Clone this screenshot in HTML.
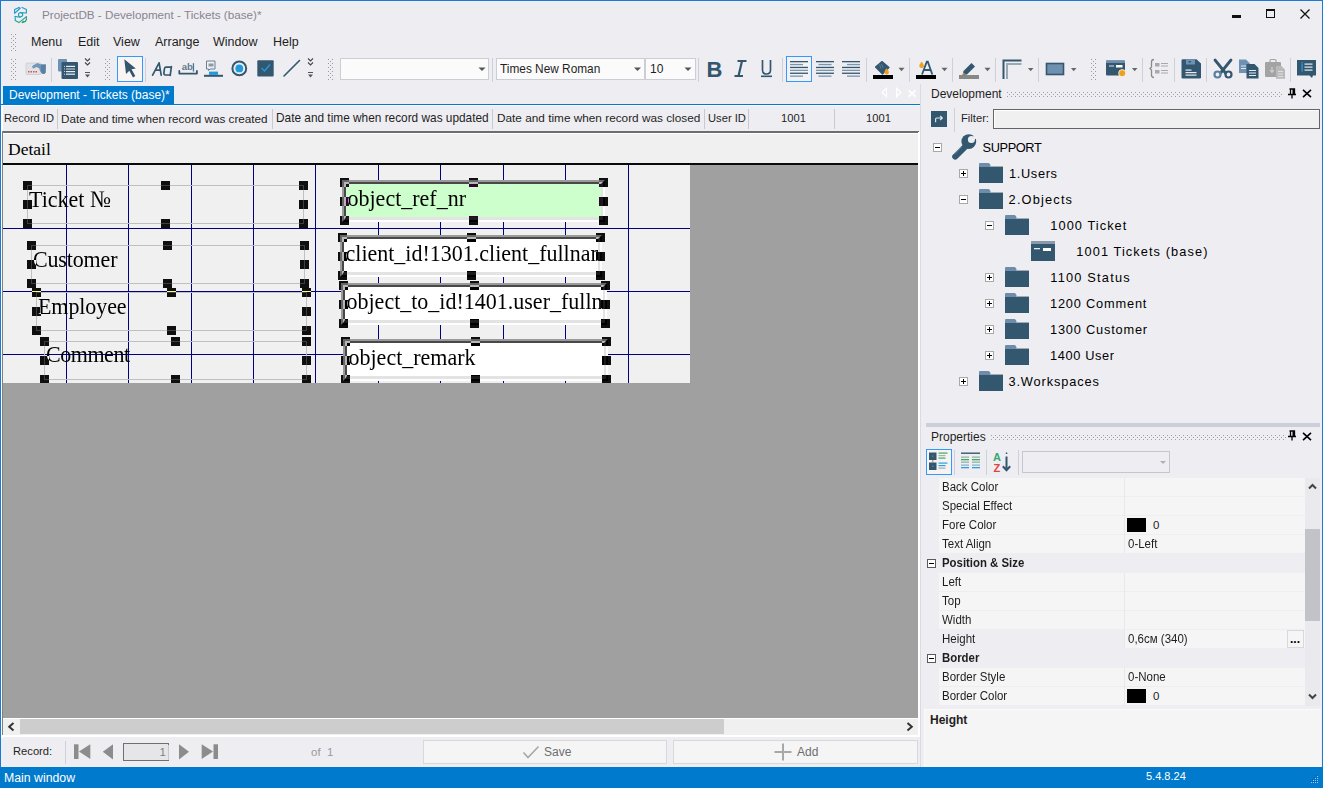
<!DOCTYPE html>
<html><head><meta charset="utf-8">
<style>
*{margin:0;padding:0;box-sizing:border-box}
html,body{width:1323px;height:788px;overflow:hidden;background:#eeeef2}
body{position:relative;font-family:"Liberation Sans",sans-serif;font-size:12px;color:#1e1e1e}
.a{position:absolute}
.t{position:absolute;white-space:nowrap;line-height:1}
.serif{font-family:"Liberation Serif",serif}
.sep{position:absolute;width:1px;background:#cccedb}
.grip{position:absolute;width:5px;background-image:radial-gradient(circle,#999 0.7px,transparent 0.8px);background-size:4px 4px}
.hd{position:absolute;width:9px;height:9px;background:#0f0f0f}
.tbi{position:absolute}
</style></head><body>
<!-- window border -->
<div class="a" style="left:0;top:0;width:1323px;height:1px;background:#1a7ad4"></div>
<div class="a" style="left:0;top:0;width:1px;height:788px;background:#1a7ad4"></div>
<div class="a" style="left:1322px;top:0;width:1px;height:788px;background:#1a7ad4"></div>

<!-- TITLE -->
<svg class="a" style="left:10px;top:4px" width="22" height="22" viewBox="0 0 22 22">
 <defs><linearGradient id="ig" gradientUnits="userSpaceOnUse" x1="5" y1="3" x2="13" y2="19"><stop offset="0" stop-color="#2196e0"/><stop offset="0.55" stop-color="#22a0b8"/><stop offset="1" stop-color="#2aa06a"/></linearGradient></defs>
 <g fill="none" stroke="url(#ig)" stroke-width="1.15" stroke-linejoin="round">
  <path d="M4.6 9.3 L4.6 5.6 L9 3.4 L10.2 4.2 Z"/>
  <path d="M11.6 3.2 L16.4 5.6 L16.4 9 L10.6 8.6"/>
  <path d="M8.6 9.6 L10.6 8.4 L12.6 9.4 L12.6 11.8 L10.6 13 L8.6 12 Z"/>
  <path d="M4.4 12.4 L10.4 13.2 M5.2 12.8 L5.2 16.4 L9 18.6 L16.4 12.6 L16.4 15.6 L15.4 17.4 L12.2 18.6 L13.6 17"/>
 </g>
</svg>
<div class="t" id="title" style="left:42px;top:9px;font-size:11.7px;color:#8a8490">ProjectDB - Development - Tickets (base)*</div>
<!-- window buttons -->
<div class="a" style="left:1232px;top:15px;width:9px;height:3px;background:#111"></div>
<div class="a" style="left:1266px;top:9px;width:9px;height:9px;border:1px solid #111;border-top-width:2px"></div>
<svg class="a" style="left:1300px;top:9px" width="10" height="10"><path d="M0.5 0.5 L9.5 9.5 M9.5 0.5 L0.5 9.5" stroke="#111" stroke-width="1.3"/></svg>

<!-- MENU -->
<div class="t" style="left:31px;top:36px;font-size:12.5px;color:#1e1e1e">Menu</div>
<div class="t" style="left:78px;top:36px;font-size:12.5px">Edit</div>
<div class="t" style="left:113px;top:36px;font-size:12.5px">View</div>
<div class="t" style="left:155px;top:36px;font-size:12.5px">Arrange</div>
<div class="t" style="left:213px;top:36px;font-size:12.5px">Window</div>
<div class="t" style="left:273px;top:36px;font-size:12.5px">Help</div>

<!-- TOOLBAR -->
<svg class="a" style="left:0;top:0" width="1323" height="90" viewBox="0 0 1323 90">
<defs><pattern id="gp" width="4" height="4" patternUnits="userSpaceOnUse"><rect x="0" y="0" width="1" height="1" fill="#999"/><rect x="2" y="2" width="1" height="1" fill="#999"/></pattern></defs>
<!-- grips --><g fill="#9a9a9a"><rect x="11" y="34" width="1" height="1"/><rect x="15" y="34" width="1" height="1"/><rect x="13" y="36" width="1" height="1"/><rect x="11" y="38" width="1" height="1"/><rect x="15" y="38" width="1" height="1"/><rect x="13" y="40" width="1" height="1"/><rect x="11" y="42" width="1" height="1"/><rect x="15" y="42" width="1" height="1"/><rect x="13" y="44" width="1" height="1"/><rect x="11" y="46" width="1" height="1"/><rect x="15" y="46" width="1" height="1"/><rect x="13" y="48" width="1" height="1"/><rect x="11" y="50" width="1" height="1"/><rect x="15" y="50" width="1" height="1"/><rect x="11" y="59" width="1" height="1"/><rect x="15" y="59" width="1" height="1"/><rect x="13" y="61" width="1" height="1"/><rect x="11" y="63" width="1" height="1"/><rect x="15" y="63" width="1" height="1"/><rect x="13" y="65" width="1" height="1"/><rect x="11" y="67" width="1" height="1"/><rect x="15" y="67" width="1" height="1"/><rect x="13" y="69" width="1" height="1"/><rect x="11" y="71" width="1" height="1"/><rect x="15" y="71" width="1" height="1"/><rect x="13" y="73" width="1" height="1"/><rect x="11" y="75" width="1" height="1"/><rect x="15" y="75" width="1" height="1"/><rect x="13" y="77" width="1" height="1"/><rect x="11" y="79" width="1" height="1"/><rect x="15" y="79" width="1" height="1"/><rect x="105" y="59" width="1" height="1"/><rect x="109" y="59" width="1" height="1"/><rect x="107" y="61" width="1" height="1"/><rect x="105" y="63" width="1" height="1"/><rect x="109" y="63" width="1" height="1"/><rect x="107" y="65" width="1" height="1"/><rect x="105" y="67" width="1" height="1"/><rect x="109" y="67" width="1" height="1"/><rect x="107" y="69" width="1" height="1"/><rect x="105" y="71" width="1" height="1"/><rect x="109" y="71" width="1" height="1"/><rect x="107" y="73" width="1" height="1"/><rect x="105" y="75" width="1" height="1"/><rect x="109" y="75" width="1" height="1"/><rect x="107" y="77" width="1" height="1"/><rect x="105" y="79" width="1" height="1"/><rect x="109" y="79" width="1" height="1"/><rect x="328" y="59" width="1" height="1"/><rect x="332" y="59" width="1" height="1"/><rect x="330" y="61" width="1" height="1"/><rect x="328" y="63" width="1" height="1"/><rect x="332" y="63" width="1" height="1"/><rect x="330" y="65" width="1" height="1"/><rect x="328" y="67" width="1" height="1"/><rect x="332" y="67" width="1" height="1"/><rect x="330" y="69" width="1" height="1"/><rect x="328" y="71" width="1" height="1"/><rect x="332" y="71" width="1" height="1"/><rect x="330" y="73" width="1" height="1"/><rect x="328" y="75" width="1" height="1"/><rect x="332" y="75" width="1" height="1"/><rect x="330" y="77" width="1" height="1"/><rect x="328" y="79" width="1" height="1"/><rect x="332" y="79" width="1" height="1"/><rect x="1091" y="59" width="1" height="1"/><rect x="1095" y="59" width="1" height="1"/><rect x="1093" y="61" width="1" height="1"/><rect x="1091" y="63" width="1" height="1"/><rect x="1095" y="63" width="1" height="1"/><rect x="1093" y="65" width="1" height="1"/><rect x="1091" y="67" width="1" height="1"/><rect x="1095" y="67" width="1" height="1"/><rect x="1093" y="69" width="1" height="1"/><rect x="1091" y="71" width="1" height="1"/><rect x="1095" y="71" width="1" height="1"/><rect x="1093" y="73" width="1" height="1"/><rect x="1091" y="75" width="1" height="1"/><rect x="1095" y="75" width="1" height="1"/><rect x="1093" y="77" width="1" height="1"/><rect x="1091" y="79" width="1" height="1"/><rect x="1095" y="79" width="1" height="1"/></g>
<!-- separators -->
<g fill="#cdd0da">
<rect x="51" y="58" width="1" height="24"/><rect x="145" y="58" width="1" height="24"/>
<rect x="492" y="58" width="1" height="24"/><rect x="698" y="58" width="1" height="24"/>
<rect x="782" y="58" width="1" height="24"/><rect x="866" y="58" width="1" height="24"/>
<rect x="909" y="58" width="1" height="24"/><rect x="952" y="58" width="1" height="24"/>
<rect x="995" y="58" width="1" height="24"/><rect x="1038" y="58" width="1" height="24"/>
<rect x="1142" y="58" width="1" height="24"/><rect x="1174" y="58" width="1" height="24"/>
<rect x="1206" y="58" width="1" height="24"/><rect x="1290" y="58" width="1" height="24"/>
</g>
<!-- icon1 card + hand -->
<rect x="26" y="63" width="15" height="11.5" rx="1" fill="#dfe2e6" stroke="#c8ccd2" stroke-width="0.8"/>
<g fill="#e84a4a"><rect x="28" y="71" width="1.5" height="1.5"/><rect x="30.5" y="71" width="1.5" height="1.5"/><rect x="33" y="71" width="1.5" height="1.5"/><rect x="35.5" y="71" width="1.5" height="1.5"/></g>
<path d="M32.3 67.3 Q31.8 66.2 33 65.5 L37.3 63 L41.2 64.4 L45.8 64.6 L45.6 72.3 Q45 74.2 43.6 74.1 L42 73.4 L40 71 L39.2 68.2 L36.4 66.9 L33.6 68.6 Q32.7 68.6 32.3 67.3 Z" fill="#7196b8"/>
<path d="M41 64.6 L45.8 64.6 L45.6 72.3 Q45 74.2 43.6 74.1 L42 73.4 L41 71.5 Z" fill="#5b80a3"/>
<!-- icon2 stacked list -->
<rect x="58" y="59" width="9" height="12.5" rx="1" fill="#6f92b4"/>
<rect x="61.5" y="62" width="16.5" height="17" rx="1" fill="#345770"/>
<g fill="#e8edf2"><rect x="64" y="66" width="0.9" height="0.9"/><rect x="66" y="65.8" width="9" height="1.2"/>
<rect x="64" y="68.5" width="0.9" height="0.9"/><rect x="66" y="68.4" width="9" height="1.2" fill="#b8c6d3"/>
<rect x="64" y="71" width="0.9" height="0.9"/><rect x="66" y="71" width="9" height="1.2"/>
<rect x="64" y="73.8" width="0.9" height="0.9"/><rect x="66" y="73.6" width="9" height="1.2"/></g>
<!-- chevrons -->
<g fill="none" stroke="#444" stroke-width="1.1"><path d="M85 58.5 L87.5 61 L90 58.5 M85 62.5 L87.5 65 L90 62.5"/></g>
<rect x="85" y="72" width="5" height="1" fill="#555"/><path d="M85 74.5 L90 74.5 L87.5 77.5 Z" fill="#555"/>
<g fill="none" stroke="#444" stroke-width="1.1"><path d="M308 58.5 L310.5 61 L313 58.5 M308 62.5 L310.5 65 L313 62.5"/></g>
<rect x="308" y="72" width="5" height="1" fill="#555"/><path d="M308 74.5 L313 74.5 L310.5 77.5 Z" fill="#555"/>
<!-- selected arrow -->
<rect x="117.5" y="56.5" width="25" height="25" fill="#f9f5f3" stroke="#3399ff" stroke-width="1"/>
<path d="M124.3 59.3 L135.8 68.5 L131.5 69.2 L135.3 76 L133 77.6 L129.3 70.8 L126 74 Z" fill="#345770"/>
<!-- Aa -->
<path d="M152.6 75.2 L159.1 62.8 L161.2 75.2 M155.3 70.2 L160.4 70.2" fill="none" stroke="#345770" stroke-width="1.7" stroke-linejoin="round" stroke-linecap="round"/>
<path d="M171.3 67 L165.8 67.1 Q164.6 67.2 164.4 69 L163.9 73.2 Q163.8 75 165.4 75 L170.4 74.9 M171.4 66.6 L170.2 75.3" fill="none" stroke="#345770" stroke-width="1.7" stroke-linejoin="round" stroke-linecap="round"/>
<!-- abl -->
<text x="181.8" y="70.4" font-family="Liberation Sans" font-weight="bold" font-size="9.6" fill="#5f7a90" letter-spacing="-0.2">ab</text>
<rect x="192.8" y="63.2" width="1.3" height="8.4" fill="#56728a"/>
<path d="M179.3 71 L179.3 73.6 L196.9 73.6 L196.9 71" fill="none" stroke="#345770" stroke-width="1.8" stroke-linecap="round" stroke-linejoin="round"/>
<!-- button icon -->
<path d="M206.5 61 L215 61 L215 69 L210 69 L208.5 70.5 L208.5 69 L206.5 69 Z" fill="#eef0f3" stroke="#6d7f8e" stroke-width="1"/>
<rect x="208.5" y="63.5" width="5" height="3" fill="#8b9aa8"/>
<rect x="209" y="71.6" width="9" height="3.2" fill="#1e9be0"/>
<rect x="204" y="74.8" width="19" height="2" fill="#345770"/>
<!-- radio -->
<circle cx="239.3" cy="68.4" r="6.9" fill="none" stroke="#345770" stroke-width="2"/>
<circle cx="239.3" cy="68.4" r="3.9" fill="#1e9be0"/>
<!-- checkbox -->
<rect x="257.3" y="60.3" width="16.4" height="16.2" rx="1" fill="#345770"/>
<path d="M261.5 68 L264.5 71 L270 64.5" fill="none" stroke="#1e9be0" stroke-width="1.3"/>
<!-- line -->
<path d="M284 76 L299.5 60.5" stroke="#345770" stroke-width="1.6" stroke-linecap="round"/>
<!-- combos -->
<rect x="340.5" y="58.5" width="148" height="21" fill="#fbfbfb" stroke="#ccced6"/>
<path d="M478.5 67.5 L485.5 67.5 L482 71 Z" fill="#555"/>
<rect x="496.5" y="58.5" width="148" height="21" fill="#fbfbfb" stroke="#ccced6"/>
<path d="M634 67.5 L641 67.5 L637.5 71 Z" fill="#555"/>
<rect x="645.5" y="58.5" width="50" height="21" fill="#fbfbfb" stroke="#ccced6"/>
<path d="M684.5 67.5 L691.5 67.5 L688 71 Z" fill="#555"/>
<text x="500" y="73" font-family="Liberation Sans" font-size="11.85" fill="#1e1e1e">Times New Roman</text>
<text x="650" y="73" font-family="Liberation Sans" font-size="12" fill="#1e1e1e">10</text>
<!-- B I U -->
<text x="706.5" y="77" font-family="Liberation Sans" font-weight="bold" font-size="22" fill="#345770">B</text>
<path d="M737.5 61 L746.5 61 M734.5 76 L743 76 M742 61 L738.5 76" stroke="#345770" stroke-width="2.2" fill="none"/>
<path d="M762.5 60 L762.5 70 Q762.5 74 766.5 74 Q770.5 74 770.5 70 L770.5 60" stroke="#345770" stroke-width="1.7" fill="none"/>
<rect x="761" y="75.5" width="11" height="1.6" fill="#345770"/>
<!-- align -->
<rect x="786.5" y="56.5" width="25" height="25" fill="#f2f2f4" stroke="#3399ff" stroke-width="1"/>
<g fill="#345770">
<rect x="790" y="61" width="18" height="1.3"/><rect x="790" y="66.8" width="18" height="1.3"/><rect x="790" y="72.6" width="18" height="1.3"/>
<rect x="816" y="61" width="18" height="1.3"/><rect x="816" y="66.8" width="18" height="1.3"/><rect x="816" y="72.6" width="18" height="1.3"/>
<rect x="842" y="61" width="18" height="1.3"/><rect x="842" y="66.8" width="18" height="1.3"/><rect x="842" y="72.6" width="18" height="1.3"/>
</g>
<g fill="#7a94ab">
<rect x="790" y="63.9" width="13" height="1.3"/><rect x="790" y="69.7" width="18" height="1.3"/><rect x="790" y="75.5" width="13" height="1.3"/>
<rect x="818.5" y="63.9" width="13" height="1.3"/><rect x="816" y="69.7" width="18" height="1.3"/><rect x="818.5" y="75.5" width="13" height="1.3"/>
<rect x="847" y="63.9" width="13" height="1.3"/><rect x="842" y="69.7" width="18" height="1.3"/><rect x="847" y="75.5" width="13" height="1.3"/>
</g>
<!-- fill color -->
<path d="M875.5 67 L882 61.5 L889 67.5 L882.5 74 Z" fill="#345770" stroke="#345770" stroke-width="1.2" stroke-linejoin="round"/><path d="M879.5 64.5 L881 68.5 M881.5 63.8 L883 67.8" stroke="#6f92b4" stroke-width="0.6"/>
<path d="M886.6 68.2 Q883.8 71.6 884.4 73.1 Q885.2 74.6 886.8 74.5 Q888.6 74.3 888.9 72.7 Q889.2 71 886.6 68.2 Z" fill="#f0a020"/>
<rect x="873" y="75" width="20" height="4" fill="#000"/>
<path d="M898.5 67.8 L904.5 67.8 L901.5 71.2 Z" fill="#666"/>
<!-- font color -->
<path d="M922 74.5 L926.8 61.7 L927.8 61.7 L932.3 74.5 M924 70 L930.5 70" stroke="#345770" stroke-width="1.8" fill="none"/>
<path d="M921.6 61.6 Q918.8 65.2 919.4 66.6 Q920.2 68.2 921.8 68.1 Q923.6 67.9 923.9 66.3 Q924.2 64.6 921.6 61.6 Z" fill="#f0a020"/>
<rect x="916" y="75" width="20" height="4" fill="#000"/>
<path d="M941.5 67.8 L947.5 67.8 L944.5 71.2 Z" fill="#666"/>
<!-- pen -->
<path d="M963.5 71 L971.5 63 L975 66.5 L967 74.5 L962.5 75 Z" fill="#345770"/>
<path d="M962 75 L963.5 72.5 L965 74 Z" fill="#f0a020"/>
<rect x="959" y="75" width="20" height="4" fill="#878787"/>
<path d="M984.5 67.8 L990.5 67.8 L987.5 71.2 Z" fill="#666"/>
<!-- border corner -->
<path d="M1003.5 79 L1003.5 60.5 L1021.5 60.5" fill="none" stroke="#345770" stroke-width="2"/>
<path d="M1007 79 L1007 64 L1021.5 64" fill="none" stroke="#9aa8b4" stroke-width="2"/>
<path d="M1028 68 L1033.5 68 L1030.7 71.3 Z" fill="#666"/>
<!-- rect -->
<rect x="1046.5" y="63.5" width="17" height="11" fill="#7090b0" stroke="#345770" stroke-width="1.6"/>
<path d="M1071 68 L1076.5 68 L1073.7 71.3 Z" fill="#666"/>
<!-- form props -->
<rect x="1106" y="60.5" width="19" height="15" rx="1" fill="#345770"/>
<rect x="1106" y="60.5" width="19" height="2.5" fill="#6f8fae"/>
<rect x="1109" y="65.5" width="5" height="1" fill="#dfe6ec"/>
<rect x="1116" y="65" width="6.5" height="2.5" fill="#ffffff"/>
<circle cx="1122.2" cy="73.2" r="3.6" fill="#f0a020" stroke="#fff" stroke-width="0.8"/>
<path d="M1132 68 L1137.5 68 L1134.7 71.3 Z" fill="#666"/>
<!-- brace list -->
<path d="M1154 59.5 Q1151.5 59.5 1151.5 62 L1151.5 67 L1150 68.5 L1151.5 70 L1151.5 75 Q1151.5 77.5 1154 77.5" fill="none" stroke="#8a8a8a" stroke-width="1.3"/>
<g fill="#a9a9a9"><rect x="1155" y="63" width="4.5" height="3.5"/><rect x="1155" y="70" width="4.5" height="3.5"/>
<rect x="1161" y="63" width="7" height="1"/><rect x="1161" y="65.5" width="7" height="1"/><rect x="1161" y="70" width="7" height="1"/><rect x="1161" y="72.5" width="7" height="1"/></g>
<!-- save -->
<path d="M1181.5 60.5 Q1181.5 59.2 1182.8 59.2 L1196.5 59.2 L1201 63.5 L1201 77.3 Q1201 78.6 1199.7 78.6 L1182.8 78.6 Q1181.5 78.6 1181.5 77.3 Z" fill="#345770"/>
<rect x="1186" y="59.2" width="9" height="5.3" fill="#6f92b4"/>
<rect x="1188.5" y="61" width="2.5" height="1.5" fill="#345770"/>
<g fill="#e8edf2"><rect x="1185.5" y="69.5" width="6" height="1.2"/><rect x="1185.5" y="72" width="11" height="1.2"/><rect x="1185.5" y="74.5" width="11" height="1.2"/></g>
<!-- scissors -->
<path d="M1215 60 L1225.5 73 M1231 60 L1220.5 73" stroke="#345770" stroke-width="2.8" stroke-linecap="round"/>
<circle cx="1217.5" cy="74.5" r="3" fill="none" stroke="#5b7f9e" stroke-width="2.2"/>
<circle cx="1228.5" cy="74.5" r="3" fill="none" stroke="#345770" stroke-width="2.2"/>
<!-- copy -->
<path d="M1239 59.5 L1246 59.5 L1250 63.5 L1250 73 L1239 73 Z" fill="#6f92b4"/>
<path d="M1246.5 64 L1254.5 64 L1258.5 68 L1258.5 78.5 L1246.5 78.5 Z" fill="#345770"/>
<g fill="#e8edf2"><rect x="1249" y="70" width="7" height="1"/><rect x="1249" y="72.5" width="7" height="1"/><rect x="1249" y="75" width="7" height="1"/>
<rect x="1241" y="65.5" width="5" height="1" fill="#dde5ec"/><rect x="1241" y="68" width="5" height="1" fill="#dde5ec"/></g>
<!-- paste grey -->
<rect x="1265" y="62" width="16" height="15" rx="1" fill="#a3a3a3"/>
<rect x="1270" y="59.5" width="6" height="3.5" rx="1" fill="none" stroke="#a3a3a3" stroke-width="1.2"/>
<path d="M1276 66 L1281.5 66 L1285 69.5 L1285 78.7 L1276 78.7 Z" fill="#b9b9b9"/>
<g fill="#e0e0e0"><rect x="1278" y="71" width="5" height="1"/><rect x="1278" y="73.5" width="5" height="1"/><rect x="1278" y="76" width="5" height="1"/></g>
<path d="M1272 67 L1272 72 M1270 70 L1272 72.5 L1274 70" fill="none" stroke="#e0e0e0" stroke-width="0.9"/>
<!-- comment -->
<path d="M1297 60 L1316 60 L1316 75.5 L1313 75.5 L1312 78 L1309.5 75.5 L1297 75.5 Z" fill="#345770"/>
<rect x="1301.5" y="63.5" width="1.2" height="8" fill="#2aa0e0"/><rect x="1301.5" y="62" width="1.2" height="1" fill="#2aa0e0"/>
<g fill="#e8edf2"><rect x="1304.5" y="63.5" width="8" height="1.2"/><rect x="1304.5" y="66.5" width="8" height="1.2"/><rect x="1304.5" y="69.5" width="8" height="1.2"/></g>
</svg>

<!-- DOC TAB -->
<div class="a" style="left:3px;top:86px;width:171px;height:18px;background:#007acc"></div>
<div class="t" style="left:9px;top:89px;font-size:12px;color:#fff">Development - Tickets (base)*</div>
<div class="a" style="left:1px;top:104px;width:919px;height:1px;background:#007acc"></div>
<svg class="a" style="left:875px;top:84px" width="45" height="18" viewBox="875 84 45 18"><g fill="none" stroke="#fff" stroke-width="1.2" stroke-linejoin="miter"><path d="M886.5 88.3 L882.2 92.4 L886.5 96.5 Z"/><path d="M896.6 88.3 L900.9 92.4 L896.6 96.5 Z"/><path d="M908.6 90.3 L915.6 96.6 M915.6 90.3 L908.6 96.6" stroke-width="1.6"/></g></svg>
<!-- doc area left border -->
<div class="a" style="left:1px;top:105px;width:2px;height:633px;background:#fff"></div>
<div class="a" style="left:2px;top:131px;width:1px;height:604px;background:#808080"></div>

<!-- COLUMN HEADERS -->
<div class="a" style="left:3px;top:105px;width:917px;height:1px;background:#fff"></div>
<div class="t" style="left:4px;top:113px;font-size:11.1px">Record ID</div>
<div class="a" style="left:57px;top:109px;width:1px;height:20px;background:#c9c9cf"></div>
<div class="t" style="left:61px;top:113px;font-size:11.7px">Date and time when record was created</div>
<div class="a" style="left:272px;top:109px;width:1px;height:20px;background:#c9c9cf"></div>
<div class="t" style="left:276px;top:113px;font-size:11.85px">Date and time when record was updated</div>
<div class="a" style="left:492px;top:109px;width:1px;height:20px;background:#c9c9cf"></div>
<div class="t" style="left:497px;top:113px;font-size:11.8px">Date and time when record was closed</div>
<div class="a" style="left:704px;top:109px;width:1px;height:20px;background:#c9c9cf"></div>
<div class="t" style="left:708px;top:113px;font-size:11.2px">User ID</div>
<div class="a" style="left:748px;top:109px;width:1px;height:20px;background:#c9c9cf"></div>
<div class="t" style="left:781px;top:113px;font-size:11.2px">1001</div>
<div class="a" style="left:834px;top:109px;width:1px;height:20px;background:#c9c9cf"></div>
<div class="t" style="left:866px;top:113px;font-size:11.2px">1001</div>


<!-- DETAIL BAND -->
<div class="a" style="left:3px;top:131px;width:916px;height:2px;background:#6e6e6e"></div>
<div class="a" style="left:918px;top:132px;width:2px;height:605px;background:#fff"></div>
<div class="a" style="left:3px;top:133px;width:915px;height:30px;background:#f0f0f0;border-top:1px solid #fff"></div>
<div class="t serif" style="left:8px;top:141px;font-size:17.5px;color:#000">Detail</div>
<div class="a" style="left:3px;top:163px;width:915px;height:2px;background:#0a0a0a"></div>

<!-- WORKSPACE -->
<div class="a" style="left:3px;top:165px;width:915px;height:553px;background:#a0a0a0"></div>
<div class="a" id="form" style="left:3px;top:165px;width:687px;height:218px;background:#f0f0f0;overflow:hidden;isolation:isolate"><div class="a" style="left:63px;top:0px;width:1px;height:218px;background:#000080"></div>
<div class="a" style="left:125px;top:0px;width:1px;height:218px;background:#000080"></div>
<div class="a" style="left:188px;top:0px;width:1px;height:218px;background:#000080"></div>
<div class="a" style="left:250px;top:0px;width:1px;height:218px;background:#000080"></div>
<div class="a" style="left:312px;top:0px;width:1px;height:218px;background:#000080"></div>
<div class="a" style="left:375px;top:0px;width:1px;height:218px;background:#000080"></div>
<div class="a" style="left:437px;top:0px;width:1px;height:218px;background:#000080"></div>
<div class="a" style="left:500px;top:0px;width:1px;height:218px;background:#000080"></div>
<div class="a" style="left:562px;top:0px;width:1px;height:218px;background:#000080"></div>
<div class="a" style="left:625px;top:0px;width:1px;height:218px;background:#000080"></div>
<div class="a" style="left:0px;top:63px;width:687px;height:1px;background:#000080"></div>
<div class="a" style="left:0px;top:126px;width:687px;height:1px;background:#000080"></div>
<div class="a" style="left:0px;top:189px;width:687px;height:1px;background:#000080"></div>
<div class="a" style="left:24px;top:20px;width:277px;height:39px;border:1px solid #c0c0c0"></div>
<div class="t serif" style="left:26px;top:24px;font-size:22px;letter-spacing:0px;color:#000;line-height:22px;transform:scaleY(1.08);transform-origin:0 18.4px">Ticket №</div>
<div class="a" style="left:28px;top:80px;width:274px;height:39px;border:1px solid #c0c0c0"></div>
<div class="t serif" style="left:30px;top:84px;font-size:22px;letter-spacing:-0.15px;color:#000;line-height:22px;transform:scaleY(1.08);transform-origin:0 18.4px">Customer</div>
<div class="a" style="left:33px;top:127px;width:271px;height:39px;border:1px solid #c0c0c0"></div>
<div class="t serif" style="left:35px;top:131px;font-size:22px;letter-spacing:-0.08px;color:#000;line-height:22px;transform:scaleY(1.08);transform-origin:0 18.4px">Employee</div>
<div class="a" style="left:41px;top:176px;width:263px;height:39px;border:1px solid #c0c0c0"></div>
<div class="t serif" style="left:43px;top:179px;font-size:22px;letter-spacing:-0.45px;color:#000;line-height:22px;transform:scaleY(1.08);transform-origin:0 18.4px">Comment</div>
<div class="a" style="left:339px;top:15px;width:263px;height:42px;border-style:solid;border-width:2px;border-color:#9a9a9a #fff #fff #9a9a9a;background:#e3e3e3"><div class="a" style="left:0;top:0;right:0;bottom:0;border-style:solid;border-width:2px 2px 3px 2px;border-color:#484848 #e3e3e3 #e3e3e3 #484848;background:#ccffcc;overflow:hidden"><div class="t serif" style="left:1.5px;top:4px;font-size:22px;color:#000;line-height:22px;transform:scaleY(1.075);transform-origin:0 18.4px">object_ref_nr</div></div></div>
<div class="a" style="left:337px;top:70px;width:262px;height:42px;border-style:solid;border-width:2px;border-color:#9a9a9a #fff #fff #9a9a9a;background:#e3e3e3"><div class="a" style="left:0;top:0;right:0;bottom:0;border-style:solid;border-width:2px 2px 3px 2px;border-color:#484848 #e3e3e3 #e3e3e3 #484848;background:#fff;overflow:hidden"><div class="t serif" style="left:1.5px;top:4px;font-size:22px;color:#000;line-height:22px;transform:scaleY(1.075);transform-origin:0 18.4px">client_id!1301.client_fullname</div></div></div>
<div class="a" style="left:338px;top:118px;width:266px;height:42px;border-style:solid;border-width:2px;border-color:#9a9a9a #fff #fff #9a9a9a;background:#e3e3e3"><div class="a" style="left:0;top:0;right:0;bottom:0;border-style:solid;border-width:2px 2px 3px 2px;border-color:#484848 #e3e3e3 #e3e3e3 #484848;background:#fff;overflow:hidden"><div class="t serif" style="left:1.5px;top:4px;font-size:22px;color:#000;line-height:22px;transform:scaleY(1.075);transform-origin:0 18.4px">object_to_id!1401.user_fullname</div></div></div>
<div class="a" style="left:340px;top:174px;width:265px;height:42px;border-style:solid;border-width:2px;border-color:#9a9a9a #fff #fff #9a9a9a;background:#e3e3e3"><div class="a" style="left:0;top:0;right:0;bottom:0;border-style:solid;border-width:2px 2px 3px 2px;border-color:#484848 #e3e3e3 #e3e3e3 #484848;background:#fff;overflow:hidden"><div class="t serif" style="left:1.5px;top:4px;font-size:22px;color:#000;line-height:22px;transform:scaleY(1.075);transform-origin:0 18.4px">object_remark</div></div></div>
<div class="a" style="left:20px;top:16px;width:9px;height:9px;background:#fff;mix-blend-mode:difference"></div>
<div class="a" style="left:158px;top:16px;width:9px;height:9px;background:#fff;mix-blend-mode:difference"></div>
<div class="a" style="left:296px;top:16px;width:9px;height:9px;background:#fff;mix-blend-mode:difference"></div>
<div class="a" style="left:20px;top:35px;width:9px;height:9px;background:#fff;mix-blend-mode:difference"></div>
<div class="a" style="left:296px;top:35px;width:9px;height:9px;background:#fff;mix-blend-mode:difference"></div>
<div class="a" style="left:20px;top:54px;width:9px;height:9px;background:#fff;mix-blend-mode:difference"></div>
<div class="a" style="left:158px;top:54px;width:9px;height:9px;background:#fff;mix-blend-mode:difference"></div>
<div class="a" style="left:296px;top:54px;width:9px;height:9px;background:#fff;mix-blend-mode:difference"></div>
<div class="a" style="left:24px;top:76px;width:9px;height:9px;background:#fff;mix-blend-mode:difference"></div>
<div class="a" style="left:160px;top:76px;width:9px;height:9px;background:#fff;mix-blend-mode:difference"></div>
<div class="a" style="left:297px;top:76px;width:9px;height:9px;background:#fff;mix-blend-mode:difference"></div>
<div class="a" style="left:24px;top:95px;width:9px;height:9px;background:#fff;mix-blend-mode:difference"></div>
<div class="a" style="left:297px;top:95px;width:9px;height:9px;background:#fff;mix-blend-mode:difference"></div>
<div class="a" style="left:24px;top:114px;width:9px;height:9px;background:#fff;mix-blend-mode:difference"></div>
<div class="a" style="left:160px;top:114px;width:9px;height:9px;background:#fff;mix-blend-mode:difference"></div>
<div class="a" style="left:297px;top:114px;width:9px;height:9px;background:#fff;mix-blend-mode:difference"></div>
<div class="a" style="left:29px;top:123px;width:9px;height:9px;background:#fff;mix-blend-mode:difference"></div>
<div class="a" style="left:164px;top:123px;width:9px;height:9px;background:#fff;mix-blend-mode:difference"></div>
<div class="a" style="left:299px;top:123px;width:9px;height:9px;background:#fff;mix-blend-mode:difference"></div>
<div class="a" style="left:29px;top:142px;width:9px;height:9px;background:#fff;mix-blend-mode:difference"></div>
<div class="a" style="left:299px;top:142px;width:9px;height:9px;background:#fff;mix-blend-mode:difference"></div>
<div class="a" style="left:29px;top:161px;width:9px;height:9px;background:#fff;mix-blend-mode:difference"></div>
<div class="a" style="left:164px;top:161px;width:9px;height:9px;background:#fff;mix-blend-mode:difference"></div>
<div class="a" style="left:299px;top:161px;width:9px;height:9px;background:#fff;mix-blend-mode:difference"></div>
<div class="a" style="left:37px;top:172px;width:9px;height:9px;background:#fff;mix-blend-mode:difference"></div>
<div class="a" style="left:168px;top:172px;width:9px;height:9px;background:#fff;mix-blend-mode:difference"></div>
<div class="a" style="left:299px;top:172px;width:9px;height:9px;background:#fff;mix-blend-mode:difference"></div>
<div class="a" style="left:37px;top:191px;width:9px;height:9px;background:#fff;mix-blend-mode:difference"></div>
<div class="a" style="left:299px;top:191px;width:9px;height:9px;background:#fff;mix-blend-mode:difference"></div>
<div class="a" style="left:37px;top:210px;width:9px;height:9px;background:#fff;mix-blend-mode:difference"></div>
<div class="a" style="left:168px;top:210px;width:9px;height:9px;background:#fff;mix-blend-mode:difference"></div>
<div class="a" style="left:299px;top:210px;width:9px;height:9px;background:#fff;mix-blend-mode:difference"></div>
<div class="a" style="left:337px;top:13px;width:9px;height:9px;background:#fff;mix-blend-mode:difference"></div>
<div class="a" style="left:466px;top:13px;width:9px;height:9px;background:#fff;mix-blend-mode:difference"></div>
<div class="a" style="left:596px;top:13px;width:9px;height:9px;background:#fff;mix-blend-mode:difference"></div>
<div class="a" style="left:337px;top:32px;width:9px;height:9px;background:#fff;mix-blend-mode:difference"></div>
<div class="a" style="left:596px;top:32px;width:9px;height:9px;background:#fff;mix-blend-mode:difference"></div>
<div class="a" style="left:337px;top:51px;width:9px;height:9px;background:#fff;mix-blend-mode:difference"></div>
<div class="a" style="left:466px;top:51px;width:9px;height:9px;background:#fff;mix-blend-mode:difference"></div>
<div class="a" style="left:596px;top:51px;width:9px;height:9px;background:#fff;mix-blend-mode:difference"></div>
<div class="a" style="left:335px;top:68px;width:9px;height:9px;background:#fff;mix-blend-mode:difference"></div>
<div class="a" style="left:464px;top:68px;width:9px;height:9px;background:#fff;mix-blend-mode:difference"></div>
<div class="a" style="left:593px;top:68px;width:9px;height:9px;background:#fff;mix-blend-mode:difference"></div>
<div class="a" style="left:335px;top:87px;width:9px;height:9px;background:#fff;mix-blend-mode:difference"></div>
<div class="a" style="left:593px;top:87px;width:9px;height:9px;background:#fff;mix-blend-mode:difference"></div>
<div class="a" style="left:335px;top:106px;width:9px;height:9px;background:#fff;mix-blend-mode:difference"></div>
<div class="a" style="left:464px;top:106px;width:9px;height:9px;background:#fff;mix-blend-mode:difference"></div>
<div class="a" style="left:593px;top:106px;width:9px;height:9px;background:#fff;mix-blend-mode:difference"></div>
<div class="a" style="left:336px;top:116px;width:9px;height:9px;background:#fff;mix-blend-mode:difference"></div>
<div class="a" style="left:467px;top:116px;width:9px;height:9px;background:#fff;mix-blend-mode:difference"></div>
<div class="a" style="left:598px;top:116px;width:9px;height:9px;background:#fff;mix-blend-mode:difference"></div>
<div class="a" style="left:336px;top:135px;width:9px;height:9px;background:#fff;mix-blend-mode:difference"></div>
<div class="a" style="left:598px;top:135px;width:9px;height:9px;background:#fff;mix-blend-mode:difference"></div>
<div class="a" style="left:336px;top:154px;width:9px;height:9px;background:#fff;mix-blend-mode:difference"></div>
<div class="a" style="left:467px;top:154px;width:9px;height:9px;background:#fff;mix-blend-mode:difference"></div>
<div class="a" style="left:598px;top:154px;width:9px;height:9px;background:#fff;mix-blend-mode:difference"></div>
<div class="a" style="left:338px;top:172px;width:9px;height:9px;background:#fff;mix-blend-mode:difference"></div>
<div class="a" style="left:468px;top:172px;width:9px;height:9px;background:#fff;mix-blend-mode:difference"></div>
<div class="a" style="left:599px;top:172px;width:9px;height:9px;background:#fff;mix-blend-mode:difference"></div>
<div class="a" style="left:338px;top:191px;width:9px;height:9px;background:#fff;mix-blend-mode:difference"></div>
<div class="a" style="left:599px;top:191px;width:9px;height:9px;background:#fff;mix-blend-mode:difference"></div>
<div class="a" style="left:338px;top:210px;width:9px;height:9px;background:#fff;mix-blend-mode:difference"></div>
<div class="a" style="left:468px;top:210px;width:9px;height:9px;background:#fff;mix-blend-mode:difference"></div>
<div class="a" style="left:599px;top:210px;width:9px;height:9px;background:#fff;mix-blend-mode:difference"></div></div>

<!-- H SCROLLBAR -->
<div class="a" style="left:3px;top:718px;width:915px;height:1px;background:#fff"></div><div class="a" style="left:3px;top:719px;width:915px;height:17px;background:#f0f0f0"></div>
<div class="a" style="left:20px;top:719px;width:704px;height:15px;background:#cdcdcd"></div>
<svg class="a" style="left:7px;top:722px" width="9" height="10"><path d="M6.5 1 L2.2 4.8 L6.5 8.6" fill="none" stroke="#333" stroke-width="2"/></svg>
<svg class="a" style="left:905px;top:722px" width="9" height="10"><path d="M2.5 1 L6.8 4.8 L2.5 8.6" fill="none" stroke="#333" stroke-width="2"/></svg>

<!-- RECORD NAV -->
<div class="a" style="left:3px;top:735px;width:917px;height:2px;background:#fff"></div>
<div class="t" style="left:13px;top:746px;font-size:11.2px;color:#1e1e1e">Record:</div>
<div class="a" style="left:65px;top:741px;width:1px;height:23px;background:#cdd0da"></div>
<svg class="a" style="left:0;top:730px" width="420" height="40" viewBox="0 730 420 40">
 <g fill="#8c8c8c">
  <rect x="74" y="744.3" width="4.5" height="14.7"/>
  <path d="M79 751.6 L90.3 744.3 L90.3 759 Z"/>
  <path d="M102.8 751.8 L113 744.3 L113 759.5 Z"/>
  <path d="M189 751.8 L179 744.3 L179 759.5 Z"/>
  <path d="M201.7 744.3 L213 751.6 L201.7 759 Z"/>
  <rect x="213.5" y="744.3" width="4.5" height="14.7"/>
 </g>
 <rect x="123.5" y="743.5" width="45" height="17" fill="#e6e6e9" stroke="#707070" stroke-width="1"/><rect x="168" y="745" width="1" height="15" fill="#c8c8cc"/>
 <rect x="124" y="744" width="44" height="1" fill="#fff" opacity="0"/>
 <text x="159.5" y="756" font-family="Liberation Sans" font-size="11.5" fill="#808080">1</text>
 <text x="311" y="756" font-family="Liberation Sans" font-size="11.5" fill="#9a9a9a" xml:space="preserve">of  1</text>
</svg>
<div class="a" style="left:423px;top:740px;width:244px;height:24px;background:#f5f5f6;border:1px solid #d7d7dc"></div>
<svg class="a" style="left:522px;top:745px" width="18" height="15"><path d="M1.5 7.5 L6 12.5 L16.5 1.5" fill="none" stroke="#a8a8a8" stroke-width="1.6"/></svg>
<div class="t" style="left:544px;top:746px;font-size:12px;color:#6e6e6e">Save</div>
<div class="a" style="left:673px;top:740px;width:245px;height:24px;background:#f5f5f6;border:1px solid #d7d7dc"></div>
<svg class="a" style="left:774px;top:743px" width="18" height="18"><path d="M9 0.5 L9 17.5 M0.5 9 L17.5 9" fill="none" stroke="#a8a8a8" stroke-width="2"/></svg>
<div class="t" style="left:797px;top:746px;font-size:12px;color:#6e6e6e">Add</div>


<!-- STATUS BAR -->
<div class="a" style="left:0;top:767px;width:1323px;height:21px;background:#007acc"></div>
<div class="t" style="left:4px;top:772px;font-size:12.3px;color:#fff">Main window</div>
<div class="t" style="left:1146px;top:771px;font-size:11px;color:#fff">5.4.8.24</div>
<svg class="a" style="left:0;top:0" width="1323" height="788" viewBox="0 0 1323 788"><rect x="1316" y="775" width="1" height="1" fill="#0a5a9a"/><rect x="1317" y="776" width="1" height="1" fill="#8fd0ff"/><rect x="1316" y="777" width="1" height="1" fill="#0a5a9a"/><rect x="1317" y="778" width="1" height="1" fill="#8fd0ff"/><rect x="1314" y="777" width="1" height="1" fill="#0a5a9a"/><rect x="1315" y="778" width="1" height="1" fill="#8fd0ff"/><rect x="1316" y="779" width="1" height="1" fill="#0a5a9a"/><rect x="1317" y="780" width="1" height="1" fill="#8fd0ff"/><rect x="1314" y="779" width="1" height="1" fill="#0a5a9a"/><rect x="1315" y="780" width="1" height="1" fill="#8fd0ff"/><rect x="1312" y="779" width="1" height="1" fill="#0a5a9a"/><rect x="1313" y="780" width="1" height="1" fill="#8fd0ff"/><rect x="1316" y="781" width="1" height="1" fill="#0a5a9a"/><rect x="1317" y="782" width="1" height="1" fill="#8fd0ff"/><rect x="1314" y="781" width="1" height="1" fill="#0a5a9a"/><rect x="1315" y="782" width="1" height="1" fill="#8fd0ff"/><rect x="1312" y="781" width="1" height="1" fill="#0a5a9a"/><rect x="1313" y="782" width="1" height="1" fill="#8fd0ff"/><rect x="1310" y="781" width="1" height="1" fill="#0a5a9a"/><rect x="1311" y="782" width="1" height="1" fill="#8fd0ff"/></svg>

<!-- RIGHT PANEL -->
<!-- dev panel -->
<div class="a" style="left:920px;top:84px;width:1px;height:683px;background:#d9dae4"></div>
<div class="t" style="left:931px;top:88px;font-size:12px;color:#1e1e1e">Development</div>
<svg class="a" style="left:1006px;top:91px" width="278" height="8"><defs><pattern id="gp2" width="4" height="4" patternUnits="userSpaceOnUse"><rect x="1" y="1" width="1" height="1" fill="#a0a0a0"/><rect x="3" y="3" width="1" height="1" fill="#a0a0a0"/></pattern></defs><rect x="0" y="0" width="277" height="7" fill="url(#gp2)"/></svg>
<svg class="a" style="left:1287px;top:88px" width="10" height="11" viewBox="0 0 10 11"><path d="M2.5 1 L7.5 1 L7.5 6 M3.5 1 L3.5 6 M1 6.5 L9 6.5 M5 6.5 L5 10.5" stroke="#000" stroke-width="1.3" fill="none"/><rect x="5.5" y="1" width="2" height="5.5" fill="#000"/></svg>
<svg class="a" style="left:1302px;top:89px" width="10" height="9"><path d="M1 0.8 L9 8.2 M9 0.8 L1 8.2" stroke="#000" stroke-width="1.6"/></svg>
<div class="a" style="left:931px;top:111px;width:16px;height:16px;background:#345770"></div>
<svg class="a" style="left:931px;top:111px" width="16" height="16"><path d="M4.6 11.2 L4.6 8 Q4.6 7 5.6 7 L11.2 7 M9.2 5 L11.3 7 L9.2 9" stroke="#dfe6ee" stroke-width="1.15" fill="none"/></svg>
<div class="a" style="left:954px;top:108px;width:1px;height:24px;background:#cdd0da"></div>
<div class="t" style="left:961px;top:113px;font-size:11.2px;color:#1e1e1e">Filter:</div>
<div class="a" style="left:993px;top:109px;width:327px;height:20px;border:1px solid #646464;background:#f0f0f0;box-shadow:inset 1px 1px 0 #fff"></div>
<!-- splitter -->
<div class="a" style="left:926px;top:423px;width:394px;height:4px;background:#ccceda"></div>
<!-- properties header -->
<div class="t" style="left:931px;top:431px;font-size:12px;color:#1e1e1e">Properties</div>
<svg class="a" style="left:990px;top:434px" width="296" height="8"><rect x="0" y="0" width="298" height="7" fill="url(#gp2)"/></svg>
<svg class="a" style="left:1287px;top:430px" width="10" height="11" viewBox="0 0 10 11"><path d="M2.5 1 L7.5 1 L7.5 6 M3.5 1 L3.5 6 M1 6.5 L9 6.5 M5 6.5 L5 10.5" stroke="#000" stroke-width="1.3" fill="none"/><rect x="5.5" y="1" width="2" height="5.5" fill="#000"/></svg>
<svg class="a" style="left:1302px;top:432px" width="10" height="9"><path d="M1 0.8 L9 8.2 M9 0.8 L1 8.2" stroke="#000" stroke-width="1.6"/></svg>
<!-- props toolbar -->
<svg class="a" style="left:920px;top:444px" width="260" height="34" viewBox="920 444 260 34">
 <rect x="926.5" y="449.5" width="25" height="25" fill="#f7f3f1" stroke="#3399ff"/>
 <rect x="929" y="452.5" width="7.5" height="7.5" fill="#345770"/><rect x="929" y="462.5" width="7.5" height="7.5" fill="#345770"/>
 <rect x="932.3" y="455.5" width="1" height="1.5" fill="#3aa86e"/><rect x="932.3" y="465.5" width="1" height="1.5" fill="#2aa0e0"/>
 <rect x="932.3" y="460" width="1" height="2.5" fill="#888"/>
 <g fill="#3aa86e"><rect x="938.5" y="452.5" width="9" height="1.2"/><rect x="938.5" y="455" width="7" height="1.2" fill="#9bb8a8"/><rect x="938.5" y="457.5" width="7" height="1.2"/></g>
 <g fill="#2aa0e0"><rect x="938.5" y="462.5" width="9" height="1.2"/><rect x="938.5" y="465" width="7" height="1.2"/><rect x="938.5" y="467.5" width="7" height="1.2" fill="#8fb0c8"/></g>
 <rect x="954" y="450" width="1" height="25" fill="#cdd0da"/>
 <rect x="961" y="452.5" width="19" height="1.4" fill="#345770"/>
 <g fill="#8fb4a0"><rect x="961" y="456.5" width="8" height="1.3"/><rect x="972" y="456.5" width="8" height="1.3"/><rect x="961" y="461.5" width="8" height="1.3"/><rect x="972" y="461.5" width="8" height="1.3"/></g>
 <g fill="#3aa86e"><rect x="961" y="459" width="8" height="1.3"/><rect x="972" y="459" width="8" height="1.3"/></g>
 <g fill="#8fb0c8"><rect x="961" y="464.5" width="8" height="1.3"/><rect x="972" y="464.5" width="8" height="1.3"/></g>
 <g fill="#2aa0e0"><rect x="961" y="467" width="8" height="1.3"/><rect x="972" y="467" width="8" height="1.3"/></g>
 <rect x="986" y="450" width="1" height="25" fill="#cdd0da"/>
 <text x="993" y="461" font-family="Liberation Sans" font-weight="bold" font-size="11" fill="#3aa86e">A</text>
 <text x="993.5" y="472" font-family="Liberation Sans" font-weight="bold" font-size="11" fill="#e04040">Z</text>
 <path d="M1006.5 456.5 L1006.5 470 M1002.8 466.3 L1006.5 470.2 L1010.2 466.3" stroke="#345770" stroke-width="2" fill="none"/>
 <rect x="1005.8" y="452.5" width="1.5" height="1.5" fill="#345770"/>
 <rect x="1018" y="450" width="1" height="25" fill="#cdd0da"/>
 <rect x="1022.5" y="451.5" width="147" height="21" fill="#eeeef2" stroke="#c6c6cc"/>
 <path d="M1160 461 L1166 461 L1163 464 Z" fill="#b0b0b0"/>
</svg>
<!-- props grid bg margin -->
<div class="a" style="left:925px;top:478px;width:380px;height:228px;background:#eeeef2"></div>
<div class="a" style="left:1124px;top:478px;width:1px;height:228px;background:#e8e8ec"></div>
<!-- scrollbar -->
<div class="a" style="left:1305px;top:478px;width:15px;height:228px;background:#e9e9ee"></div>
<div class="a" style="left:1305px;top:529px;width:15px;height:92px;background:#c2c3c9"></div>
<svg class="a" style="left:1308px;top:483px" width="9" height="7"><path d="M1 5.5 L4.5 2 L8 5.5" stroke="#444" stroke-width="2" fill="none"/></svg>
<svg class="a" style="left:1308px;top:693px" width="9" height="7"><path d="M1 1.5 L4.5 5 L8 1.5" stroke="#444" stroke-width="2" fill="none"/></svg>
<!-- description -->
<div class="a" style="left:924px;top:709px;width:397px;height:58px;background:#f5f5f5;border-top:1px solid #fafafa;border-left:1px solid #fafafa"></div>
<div class="t" style="left:930px;top:714px;font-size:12px;font-weight:bold;color:#1e1e1e">Height</div>

<!-- GEN -->
<div class="t" style="left:982.5px;top:142.0px;font-size:12.8px;letter-spacing:-0.39px;color:#000">SUPPORT</div>
<div class="a" style="left:933px;top:143px;width:9px;height:9px;border:1px solid #a8a8a8;background:#fff"></div>
<div class="a" style="left:935px;top:147px;width:5px;height:1px;background:#000"></div>
<svg class="a" style="left:948px;top:132px" width="32" height="30" viewBox="0 0 32 30"><path d="M7.2 24.6 L17.5 14.3" stroke="#345770" stroke-width="6" stroke-linecap="round"/><circle cx="20.8" cy="9.6" r="7.4" fill="#345770"/><circle cx="23.4" cy="7.6" r="3.5" fill="#eeeef2"/><path d="M23.4 7.6 L27.5 1 L33 6 Z" fill="#eeeef2"/><path d="M6.2 22.2 L13.2 15.2" stroke="#7f9ab0" stroke-width="0.9"/></svg>
<div class="t" style="left:1009.0px;top:168.0px;font-size:12.8px;letter-spacing:0.65px;color:#000">1.Users</div>
<div class="a" style="left:959px;top:169px;width:9px;height:9px;border:1px solid #a8a8a8;background:#fff"></div>
<div class="a" style="left:961px;top:173px;width:5px;height:1px;background:#000"></div>
<div class="a" style="left:963px;top:171px;width:1px;height:5px;background:#000"></div>
<svg class="a" style="left:979px;top:163px" width="24" height="20" viewBox="0 0 24 20"><path d="M0 1 Q0 0 1 0 L10 0 L11.5 2 L11.5 4 L0 4 Z" fill="#6d8dab"/><rect x="11" y="3" width="13" height="2" fill="#a3acb6"/><rect x="0" y="4" width="24" height="16" fill="#345770"/></svg>
<div class="t" style="left:1008.6px;top:194.0px;font-size:12.8px;letter-spacing:1.17px;color:#000">2.Objects</div>
<div class="a" style="left:959px;top:195px;width:9px;height:9px;border:1px solid #a8a8a8;background:#fff"></div>
<div class="a" style="left:961px;top:199px;width:5px;height:1px;background:#000"></div>
<svg class="a" style="left:979px;top:189px" width="24" height="20" viewBox="0 0 24 20"><path d="M0 1 Q0 0 1 0 L10 0 L11.5 2 L11.5 4 L0 4 Z" fill="#6d8dab"/><rect x="11" y="3" width="13" height="2" fill="#a3acb6"/><rect x="0" y="4" width="24" height="16" fill="#345770"/></svg>
<div class="t" style="left:1050.3px;top:220.0px;font-size:12.8px;letter-spacing:1.06px;color:#000">1000 Ticket</div>
<div class="a" style="left:985px;top:221px;width:9px;height:9px;border:1px solid #a8a8a8;background:#fff"></div>
<div class="a" style="left:987px;top:225px;width:5px;height:1px;background:#000"></div>
<svg class="a" style="left:1005px;top:215px" width="24" height="20" viewBox="0 0 24 20"><path d="M0 1 Q0 0 1 0 L10 0 L11.5 2 L11.5 4 L0 4 Z" fill="#6d8dab"/><rect x="11" y="3" width="13" height="2" fill="#a3acb6"/><rect x="0" y="4" width="24" height="16" fill="#345770"/></svg>
<div class="t" style="left:1076.3px;top:246.0px;font-size:12.8px;letter-spacing:1.08px;color:#000">1001 Tickets (base)</div>
<svg class="a" style="left:1031px;top:241px" width="24" height="20" viewBox="0 0 24 20"><rect x="0" y="0" width="24" height="20" fill="#345770"/><rect x="0" y="0" width="24" height="3" fill="#8a9aaa"/><rect x="3" y="7" width="6" height="1.3" fill="#e8eef4"/><rect x="12" y="7" width="8" height="3" fill="#ffffff"/></svg>
<div class="t" style="left:1050.3px;top:272.0px;font-size:12.8px;letter-spacing:1.20px;color:#000">1100 Status</div>
<div class="a" style="left:985px;top:273px;width:9px;height:9px;border:1px solid #a8a8a8;background:#fff"></div>
<div class="a" style="left:987px;top:277px;width:5px;height:1px;background:#000"></div>
<div class="a" style="left:989px;top:275px;width:1px;height:5px;background:#000"></div>
<svg class="a" style="left:1005px;top:267px" width="24" height="20" viewBox="0 0 24 20"><path d="M0 1 Q0 0 1 0 L10 0 L11.5 2 L11.5 4 L0 4 Z" fill="#6d8dab"/><rect x="11" y="3" width="13" height="2" fill="#a3acb6"/><rect x="0" y="4" width="24" height="16" fill="#345770"/></svg>
<div class="t" style="left:1050.0px;top:298.0px;font-size:12.8px;letter-spacing:0.81px;color:#000">1200 Comment</div>
<div class="a" style="left:985px;top:299px;width:9px;height:9px;border:1px solid #a8a8a8;background:#fff"></div>
<div class="a" style="left:987px;top:303px;width:5px;height:1px;background:#000"></div>
<div class="a" style="left:989px;top:301px;width:1px;height:5px;background:#000"></div>
<svg class="a" style="left:1005px;top:293px" width="24" height="20" viewBox="0 0 24 20"><path d="M0 1 Q0 0 1 0 L10 0 L11.5 2 L11.5 4 L0 4 Z" fill="#6d8dab"/><rect x="11" y="3" width="13" height="2" fill="#a3acb6"/><rect x="0" y="4" width="24" height="16" fill="#345770"/></svg>
<div class="t" style="left:1050.0px;top:324.0px;font-size:12.8px;letter-spacing:0.80px;color:#000">1300 Customer</div>
<div class="a" style="left:985px;top:325px;width:9px;height:9px;border:1px solid #a8a8a8;background:#fff"></div>
<div class="a" style="left:987px;top:329px;width:5px;height:1px;background:#000"></div>
<div class="a" style="left:989px;top:327px;width:1px;height:5px;background:#000"></div>
<svg class="a" style="left:1005px;top:319px" width="24" height="20" viewBox="0 0 24 20"><path d="M0 1 Q0 0 1 0 L10 0 L11.5 2 L11.5 4 L0 4 Z" fill="#6d8dab"/><rect x="11" y="3" width="13" height="2" fill="#a3acb6"/><rect x="0" y="4" width="24" height="16" fill="#345770"/></svg>
<div class="t" style="left:1050.0px;top:350.0px;font-size:12.8px;letter-spacing:0.63px;color:#000">1400 User</div>
<div class="a" style="left:985px;top:351px;width:9px;height:9px;border:1px solid #a8a8a8;background:#fff"></div>
<div class="a" style="left:987px;top:355px;width:5px;height:1px;background:#000"></div>
<div class="a" style="left:989px;top:353px;width:1px;height:5px;background:#000"></div>
<svg class="a" style="left:1005px;top:345px" width="24" height="20" viewBox="0 0 24 20"><path d="M0 1 Q0 0 1 0 L10 0 L11.5 2 L11.5 4 L0 4 Z" fill="#6d8dab"/><rect x="11" y="3" width="13" height="2" fill="#a3acb6"/><rect x="0" y="4" width="24" height="16" fill="#345770"/></svg>
<div class="t" style="left:1008.4px;top:376.0px;font-size:12.8px;letter-spacing:0.87px;color:#000">3.Workspaces</div>
<div class="a" style="left:959px;top:377px;width:9px;height:9px;border:1px solid #a8a8a8;background:#fff"></div>
<div class="a" style="left:961px;top:381px;width:5px;height:1px;background:#000"></div>
<div class="a" style="left:963px;top:379px;width:1px;height:5px;background:#000"></div>
<svg class="a" style="left:979px;top:371px" width="24" height="20" viewBox="0 0 24 20"><path d="M0 1 Q0 0 1 0 L10 0 L11.5 2 L11.5 4 L0 4 Z" fill="#6d8dab"/><rect x="11" y="3" width="13" height="2" fill="#a3acb6"/><rect x="0" y="4" width="24" height="16" fill="#345770"/></svg>
<div class="a" style="left:939px;top:478px;width:185px;height:18px;background:#f5f5f5"></div>
<div class="a" style="left:1125px;top:478px;width:180px;height:18px;background:#f5f5f5"></div>
<div class="t" style="left:942px;top:482px;font-size:11.5px;color:#1e1e1e;transform:scaleY(1.1);transform-origin:0 9.7px">Back Color</div>
<div class="a" style="left:939px;top:497px;width:185px;height:18px;background:#f5f5f5"></div>
<div class="a" style="left:1125px;top:497px;width:180px;height:18px;background:#f5f5f5"></div>
<div class="t" style="left:942px;top:501px;font-size:11.5px;color:#1e1e1e;transform:scaleY(1.1);transform-origin:0 9.7px">Special Effect</div>
<div class="a" style="left:939px;top:516px;width:185px;height:18px;background:#f5f5f5"></div>
<div class="a" style="left:1125px;top:516px;width:180px;height:18px;background:#f5f5f5"></div>
<div class="t" style="left:942px;top:520px;font-size:11.5px;color:#1e1e1e;transform:scaleY(1.1);transform-origin:0 9.7px">Fore Color</div>
<div class="a" style="left:1127px;top:518px;width:19px;height:14px;background:#000"></div><div class="t" style="left:1153px;top:520px;font-size:11.5px;color:#1e1e1e">0</div>
<div class="a" style="left:939px;top:535px;width:185px;height:18px;background:#f5f5f5"></div>
<div class="a" style="left:1125px;top:535px;width:180px;height:18px;background:#f5f5f5"></div>
<div class="t" style="left:942px;top:539px;font-size:11.5px;color:#1e1e1e;transform:scaleY(1.1);transform-origin:0 9.7px">Text Align</div>
<div class="t" style="left:1128px;top:539px;font-size:11.5px;color:#1e1e1e;transform:scaleY(1.1);transform-origin:0 9.7px">0-Left</div>
<div class="a" style="left:925px;top:554px;width:380px;height:19px;background:#eeeef2"></div>
<div class="a" style="left:927px;top:559px;width:9px;height:9px;border:1px solid #5a5a5a;background:#fff"></div><div class="a" style="left:929px;top:563px;width:5px;height:1px;background:#000"></div>
<div class="t" style="left:942px;top:558px;font-size:11.4px;font-weight:bold;color:#1e1e1e;transform:scaleY(1.1);transform-origin:0 9.7px">Position &amp; Size</div>
<div class="a" style="left:939px;top:573px;width:185px;height:18px;background:#f5f5f5"></div>
<div class="a" style="left:1125px;top:573px;width:180px;height:18px;background:#f5f5f5"></div>
<div class="t" style="left:942px;top:577px;font-size:11.5px;color:#1e1e1e;transform:scaleY(1.1);transform-origin:0 9.7px">Left</div>
<div class="a" style="left:939px;top:592px;width:185px;height:18px;background:#f5f5f5"></div>
<div class="a" style="left:1125px;top:592px;width:180px;height:18px;background:#f5f5f5"></div>
<div class="t" style="left:942px;top:596px;font-size:11.5px;color:#1e1e1e;transform:scaleY(1.1);transform-origin:0 9.7px">Top</div>
<div class="a" style="left:939px;top:611px;width:185px;height:18px;background:#f5f5f5"></div>
<div class="a" style="left:1125px;top:611px;width:180px;height:18px;background:#f5f5f5"></div>
<div class="t" style="left:942px;top:615px;font-size:11.5px;color:#1e1e1e;transform:scaleY(1.1);transform-origin:0 9.7px">Width</div>
<div class="a" style="left:939px;top:630px;width:185px;height:18px;background:#eeeef2"></div>
<div class="a" style="left:1125px;top:630px;width:180px;height:18px;background:#f5f5f5"></div>
<div class="t" style="left:942px;top:634px;font-size:11.5px;color:#1e1e1e;transform:scaleY(1.1);transform-origin:0 9.7px">Height</div>
<div class="t" style="left:1128px;top:634px;font-size:11.5px;color:#1e1e1e;transform:scaleY(1.1);transform-origin:0 9.7px">0,6см (340)</div>
<div class="a" style="left:1287px;top:630px;width:17px;height:18px;border:1px solid #d8d8e0;background:#f5f5f5"></div><div class="t" style="left:1290px;top:633px;font-size:12px;font-weight:bold;color:#000">...</div>
<div class="a" style="left:925px;top:649px;width:380px;height:19px;background:#eeeef2"></div>
<div class="a" style="left:927px;top:654px;width:9px;height:9px;border:1px solid #5a5a5a;background:#fff"></div><div class="a" style="left:929px;top:658px;width:5px;height:1px;background:#000"></div>
<div class="t" style="left:942px;top:653px;font-size:11.4px;font-weight:bold;color:#1e1e1e;transform:scaleY(1.1);transform-origin:0 9.7px">Border</div>
<div class="a" style="left:939px;top:668px;width:185px;height:18px;background:#f5f5f5"></div>
<div class="a" style="left:1125px;top:668px;width:180px;height:18px;background:#f5f5f5"></div>
<div class="t" style="left:942px;top:672px;font-size:11.5px;color:#1e1e1e;transform:scaleY(1.1);transform-origin:0 9.7px">Border Style</div>
<div class="t" style="left:1128px;top:672px;font-size:11.5px;color:#1e1e1e;transform:scaleY(1.1);transform-origin:0 9.7px">0-None</div>
<div class="a" style="left:939px;top:687px;width:185px;height:18px;background:#f5f5f5"></div>
<div class="a" style="left:1125px;top:687px;width:180px;height:18px;background:#f5f5f5"></div>
<div class="t" style="left:942px;top:691px;font-size:11.5px;color:#1e1e1e;transform:scaleY(1.1);transform-origin:0 9.7px">Border Color</div>
<div class="a" style="left:1127px;top:689px;width:19px;height:14px;background:#000"></div><div class="t" style="left:1153px;top:691px;font-size:11.5px;color:#1e1e1e">0</div>
<!-- /GEN -->
</body></html>
